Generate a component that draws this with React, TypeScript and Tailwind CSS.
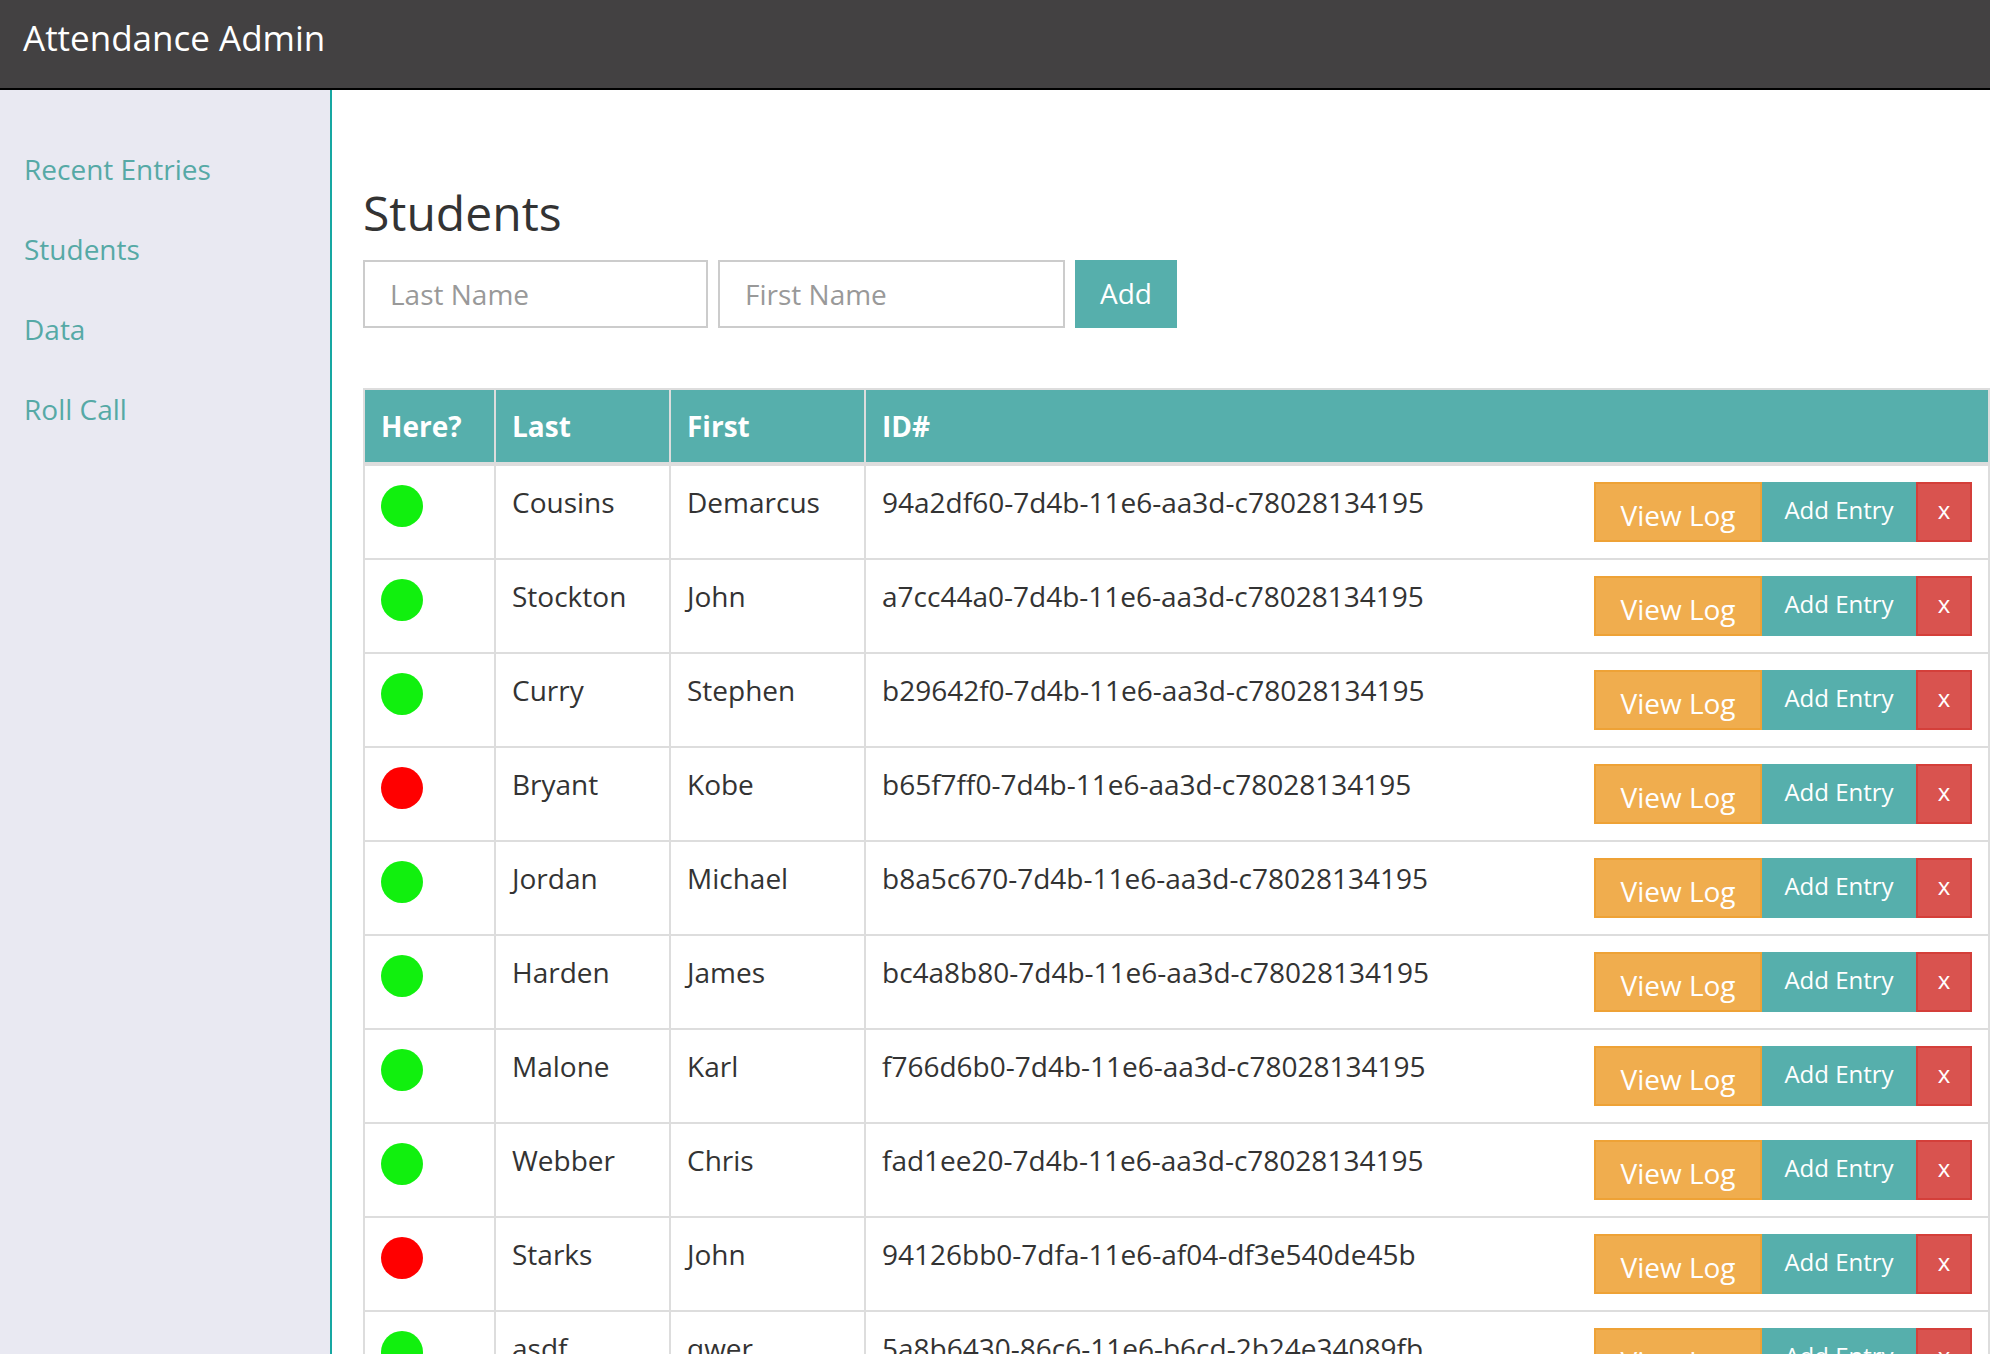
import React from "react";

type Student = {
  here: boolean;
  last: string;
  first: string;
  id: string;
};

const students: Student[] = [
  { here: true, last: "Cousins", first: "Demarcus", id: "94a2df60-7d4b-11e6-aa3d-c78028134195" },
  { here: true, last: "Stockton", first: "John", id: "a7cc44a0-7d4b-11e6-aa3d-c78028134195" },
  { here: true, last: "Curry", first: "Stephen", id: "b29642f0-7d4b-11e6-aa3d-c78028134195" },
  { here: false, last: "Bryant", first: "Kobe", id: "b65f7ff0-7d4b-11e6-aa3d-c78028134195" },
  { here: true, last: "Jordan", first: "Michael", id: "b8a5c670-7d4b-11e6-aa3d-c78028134195" },
  { here: true, last: "Harden", first: "James", id: "bc4a8b80-7d4b-11e6-aa3d-c78028134195" },
  { here: true, last: "Malone", first: "Karl", id: "f766d6b0-7d4b-11e6-aa3d-c78028134195" },
  { here: true, last: "Webber", first: "Chris", id: "fad1ee20-7d4b-11e6-aa3d-c78028134195" },
  { here: false, last: "Starks", first: "John", id: "94126bb0-7dfa-11e6-af04-df3e540de45b" },
  { here: true, last: "asdf", first: "qwer", id: "5a8b6430-86c6-11e6-b6cd-2b24e34089fb" },
];

const navItems = ["Recent Entries", "Students", "Data", "Roll Call"];

const Row = ({ s }: { s: Student }) => (
  <tr className="border-t-2 border-[#ddd]">
    <td className="border-x-2 border-[#ddd] p-[16px] align-top">
      <div
        className={`mt-[3px] h-[42px] w-[42px] rounded-full ${
          s.here ? "bg-[#11f00e]" : "bg-[#ff0000]"
        }`}
      />
    </td>
    <td className="border-x-2 border-[#ddd] p-[16px] align-top">{s.last}</td>
    <td className="border-x-2 border-[#ddd] p-[16px] align-top">{s.first}</td>
    <td className="border-x-2 border-[#ddd] p-[16px] align-top">
      <div className="flex items-start justify-between">
        <span>{s.id}</span>
        <div className="flex">
          <button className="h-[60px] w-[168px] border-2 border-[#eea236] bg-[#f0ad4e] pt-[6px] text-[28px] leading-[40px] text-white">
            View Log
          </button>
          <button className="h-[60px] w-[154px] bg-[#56afac] pb-[4px] text-[24px] leading-[34px] text-white">
            Add Entry
          </button>
          <button className="h-[60px] w-[56px] border-2 border-[#d43f3a] bg-[#d9534f] pb-[4px] text-[24px] leading-[34px] text-white">
            x
          </button>
        </div>
      </div>
    </td>
  </tr>
);

export default function App() {
  return (
    <div
      className="flex h-[1354px] flex-col overflow-hidden bg-white text-[#333]"
      style={{ fontFamily: '"Open Sans", "Liberation Sans", sans-serif' }}
    >
      {/* Top bar */}
      <header className="h-[90px] shrink-0 border-b-2 border-black bg-[#434142] pl-[23px] pt-[14px]">
        <h1 className="text-[35px] leading-[48px] text-white">Attendance Admin</h1>
      </header>

      <div className="flex min-h-0 flex-1">
        {/* Sidebar */}
        <nav className="flex w-[332px] shrink-0 flex-col gap-[40px] border-r-2 border-[#17a7a2] bg-[#e9e9f2] pl-[24px] pt-[59px]">
          {navItems.map((item) => (
            <a key={item} className="text-[28px] leading-[40px] text-[#56a9a6]">
              {item}
            </a>
          ))}
        </nav>

        {/* Main */}
        <main className="min-w-0 flex-1 pl-[31px]">
          <h2 className="mt-[95px] text-[48px] leading-[56px] text-[#333]">Students</h2>

          <div className="mt-[19px] flex gap-[10px]">
            <input
              placeholder="Last Name"
              className="h-[68px] w-[345px] border-2 border-[#ccc] pl-[25px] text-[28px] leading-[40px] outline-none placeholder:text-[#999]"
            />
            <input
              placeholder="First Name"
              className="h-[68px] w-[347px] border-2 border-[#ccc] pl-[25px] text-[28px] leading-[40px] outline-none placeholder:text-[#999]"
            />
            <button className="h-[68px] w-[102px] bg-[#56afac] pb-[2px] text-[28px] leading-[40px] text-white">
              Add
            </button>
          </div>

          <table className="mt-[60px] w-full table-fixed border-collapse border-t-2 border-[#ddd] text-[28px] leading-[40px]">
            <colgroup>
              <col className="w-[131px]" />
              <col className="w-[175px]" />
              <col className="w-[195px]" />
              <col />
            </colgroup>
            <thead>
              <tr className="border-b-4 border-[#ddd] bg-[#56afac] text-left text-white">
                <th className="border-x-2 border-[#ddd] p-[16px] font-bold">Here?</th>
                <th className="border-x-2 border-[#ddd] p-[16px] font-bold">Last</th>
                <th className="border-x-2 border-[#ddd] p-[16px] font-bold">First</th>
                <th className="border-x-2 border-[#ddd] p-[16px] font-bold">ID#</th>
              </tr>
            </thead>
            <tbody>
              {students.map((s) => (
                <Row key={s.id} s={s} />
              ))}
            </tbody>
          </table>
        </main>
      </div>
    </div>
  );
}
